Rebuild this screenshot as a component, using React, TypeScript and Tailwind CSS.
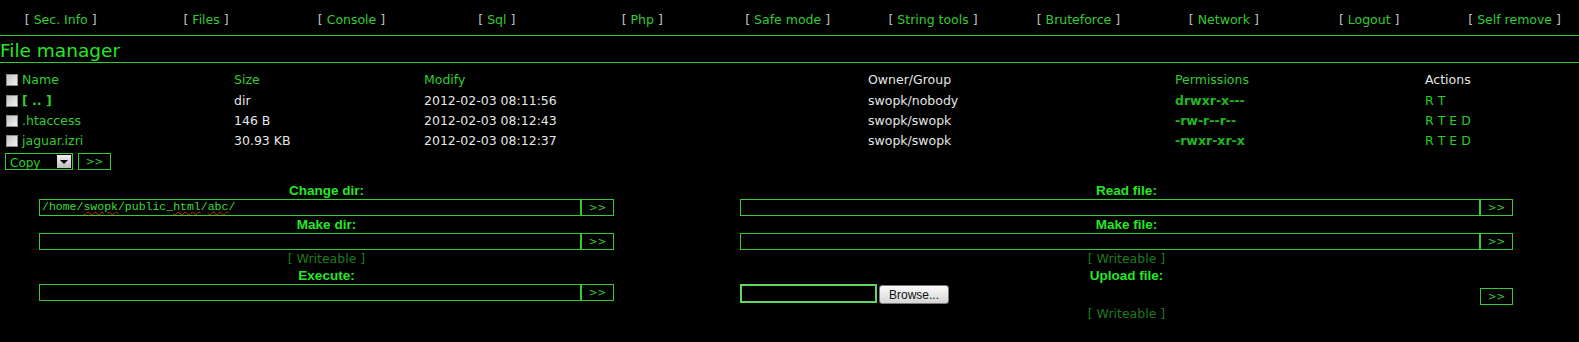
import React from "react";

const menu = [
  "Sec. Info",
  "Files",
  "Console",
  "Sql",
  "Php",
  "Safe mode",
  "String tools",
  "Bruteforce",
  "Network",
  "Logout",
  "Self remove",
];

const files = [
  { name: "[ .. ]", dir: true, size: "dir", modify: "2012-02-03 08:11:56", owner: "swopk/nobody", perms: "drwxr-x---", actions: "R T" },
  { name: ".htaccess", dir: false, size: "146 B", modify: "2012-02-03 08:12:43", owner: "swopk/swopk", perms: "-rw-r--r--", actions: "R T E D" },
  { name: "jaguar.izri", dir: false, size: "30.93 KB", modify: "2012-02-03 08:12:37", owner: "swopk/swopk", perms: "-rwxr-xr-x", actions: "R T E D" },
];

function Check() {
  return (
    <span className="inline-block w-[12px] h-[12px] border border-[#8c8c8c] bg-gradient-to-br from-[#c4c4c4] to-[#f2f2f2] mr-[4px] shrink-0" />
  );
}

function Go({ className = "" }: { className?: string }) {
  return (
    <button
      type="button"
      className={`h-[17px] w-[33px] shrink-0 border border-[#33cc33] bg-black text-[#33cc33] text-[10.5px] leading-none ${className}`}
    >
      &gt;&gt;
    </button>
  );
}

function Label({ children }: { children: React.ReactNode }) {
  return (
    <div className="h-[17px] leading-[17px] text-center font-['Liberation_Sans',sans-serif] font-bold text-[13.5px] text-[#27e627]">
      {children}
    </div>
  );
}

function Writeable() {
  return <div className="h-[17px] leading-[17px] text-center text-[#1f7a1f]">[ Writeable ]</div>;
}

function Field({ children }: { children?: React.ReactNode }) {
  return (
    <div className="flex h-[17px]">
      <div className="flex-1 h-[17px] border border-[#33cc33] bg-black pl-[2px] leading-[14px] font-['Liberation_Mono',monospace] text-[11.5px] text-[#3ddd3d] overflow-hidden whitespace-pre">
        {children}
      </div>
      <Go />
    </div>
  );
}

const squiggle = "underline decoration-wavy decoration-[#e02020] decoration-[1px] underline-offset-[1px]";

export default function App() {
  return (
    <div className="w-[1579px] h-[342px] bg-black overflow-hidden font-['DejaVu_Sans',sans-serif] text-[12.5px] text-[#e6e6e6]">
      {/* menu */}
      <nav className="h-[35px] pt-[6px] -ml-[12px] grid grid-cols-[repeat(11,145.4px)] items-center">
        {menu.map((m) => (
          <div key={m} className="text-center whitespace-nowrap text-[#c4c0c0]">
            [ <span className="text-[#33cc33]">{m}</span> ]
          </div>
        ))}
      </nav>
      <div className="h-px bg-[#33cc33]" />
      <div className="h-[26px] pt-[5px] flex items-center text-[18.5px] text-[#27e627] leading-none">File manager</div>
      <div className="h-px bg-[#33cc33]" />

      {/* file table */}
      <div className="mt-[7px] pl-[6px]">
        <div className="grid grid-cols-[228px_190px_444px_307px_250px_1fr] h-[20px] items-center">
          <div className="flex items-center text-[#33cc33]">
            <Check />
            Name
          </div>
          <div className="text-[#33cc33]">Size</div>
          <div className="text-[#33cc33]">Modify</div>
          <div>Owner/Group</div>
          <div className="text-[#33cc33]">Permissions</div>
          <div>Actions</div>
        </div>
        {files.map((f) => (
          <div key={f.name} className="grid grid-cols-[228px_190px_444px_307px_250px_1fr] h-[20px] pt-[2px] items-center">
            <div className={`flex items-center text-[#33cc33] ${f.dir ? "font-bold" : ""}`}>
              <Check />
              {f.name}
            </div>
            <div>{f.size}</div>
            <div>{f.modify}</div>
            <div>{f.owner}</div>
            <div className="font-bold text-[#22b822]">{f.perms}</div>
            <div className="text-[#27cc27]">{f.actions}</div>
          </div>
        ))}
        <div className="mt-[3px] -ml-[1px] flex gap-[5px]">
          <div className="relative w-[68px] h-[17px] border border-[#33cc33] bg-black">
            <span className="pl-[4px] leading-[15px] text-[12px] text-[#33cc33]">Copy</span>
            <span className="absolute right-[1px] top-[1px] w-[14px] h-[13px] bg-gradient-to-b from-[#f0f0f0] to-[#bdbdbd] flex items-center justify-center">
              <span className="w-0 h-0 border-l-[4px] border-r-[4px] border-t-[4px] border-l-transparent border-r-transparent border-t-black" />
            </span>
          </div>
          <Go />
        </div>
      </div>

      {/* tools */}
      <div className="mt-[12px] flex">
        <div className="ml-[39px] w-[575px]">
          <Label>Change dir:</Label>
          <Field>
            /home/<span className={squiggle}>swopk</span>/public_<span className={squiggle}>html</span>/
            <span className={squiggle}>abc</span>/
          </Field>
          <Label>Make dir:</Label>
          <Field />
          <Writeable />
          <Label>Execute:</Label>
          <Field />
        </div>
        <div className="ml-[126px] w-[773px]">
          <Label>Read file:</Label>
          <Field />
          <Label>Make file:</Label>
          <Field />
          <Writeable />
          <Label>Upload file:</Label>
          <div className="flex items-start h-[21px]">
            <div className="w-[137px] h-[19px] border-2 border-[#5fd85f] bg-black" />
            <button
              type="button"
              className="ml-[2px] mt-[1px] w-[70px] h-[19px] rounded-[3px] border border-[#7a7a7a] bg-gradient-to-b from-[#fafafa] to-[#d6d6d6] font-['Liberation_Sans',sans-serif] text-[12px] text-[#111] leading-none"
            >
              Browse...
            </button>
            <div className="flex-1" />
            <Go className="mt-[4px]" />
          </div>
          <Writeable />
        </div>
      </div>
    </div>
  );
}
